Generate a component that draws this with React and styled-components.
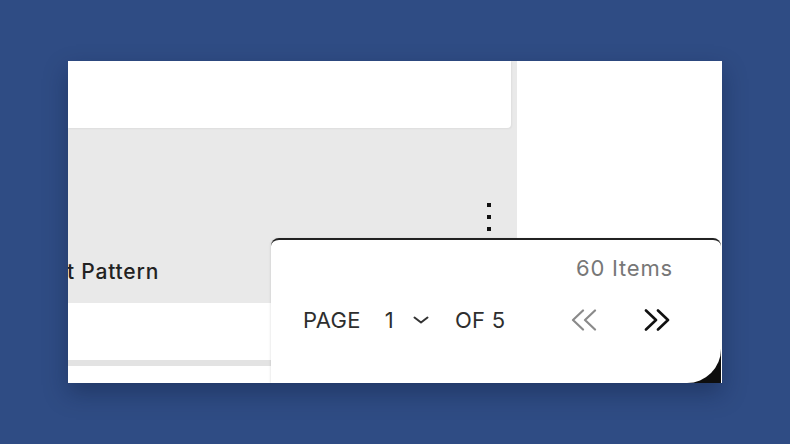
import React from "react";
import styled, { createGlobalStyle } from "styled-components";

const Global = createGlobalStyle`
  html, body { margin: 0; padding: 0; }
  body {
    background: #2f4c84;
    font-family: Inter, "Noto Sans", sans-serif;
    -webkit-font-smoothing: antialiased;
  }
`;

const Stage = styled.div`
  width: 790px;
  height: 444px;
  display: flex;
  align-items: center;
  justify-content: center;
`;

const Window = styled.div`
  position: relative;
  width: 654px;
  height: 322px;
  display: grid;
  grid-template-columns: 449px 1fr;
  background: #fff;
  overflow: hidden;
  box-shadow: 0 10px 22px rgba(10, 20, 50, 0.35);
`;

const LeftColumn = styled.div`
  display: flex;
  flex-direction: column;
  background: #e9e9e9;
`;

const TopCard = styled.div`
  height: 67px;
  margin-right: 6px;
  background: #fff;
  border-bottom-right-radius: 4px;
  box-shadow: 1px 1px 2px rgba(0, 0, 0, 0.05);
`;

const Section = styled.div`
  height: 175px;
  display: flex;
  flex-direction: column;
  padding-top: 75px;
  box-sizing: border-box;
`;

const KebabRow = styled.div`
  display: flex;
  justify-content: flex-end;
  padding-right: 26px;
`;

const Kebab = styled.div`
  display: flex;
  flex-direction: column;
  gap: 8px;
`;

const Dot = styled.span`
  width: 4px;
  height: 4px;
  background: #111;
`;

const Title = styled.div`
  margin-top: 28px;
  margin-left: -1px;
  font-size: 21px;
  font-weight: 500;
  letter-spacing: 0.8px;
  line-height: 26px;
  color: #222;
  white-space: nowrap;
`;

const Row = styled.div`
  height: 57px;
  background: #fff;
`;

const Divider = styled.div`
  height: 6px;
  background: #e3e3e3;
`;

const Filler = styled.div`
  flex: 1;
  background: #fff;
`;

const RightColumn = styled.div`
  background: #fff;
`;

const Popup = styled.div`
  position: absolute;
  left: 203px;
  top: 177px;
  right: 1px;
  bottom: 0;
  &::before {
    content: "";
    position: absolute;
    right: 0;
    bottom: 0;
    width: 36px;
    height: 44px;
    background: #0e0e0e;
  }
`;

const Panel = styled.div`
  position: relative;
  height: 100%;
  box-sizing: border-box;
  background: #fff;
  border-top: 2px solid #222;
  border-radius: 8px 8px 34px 0;
  box-shadow: -1px 0 2px rgba(0, 0, 0, 0.08);
  display: flex;
  flex-direction: column;
  padding: 0 48px 0 32px;
`;

const Count = styled.div`
  margin-top: 15px;
  text-align: right;
  font-size: 22px;
  letter-spacing: 0.8px;
  line-height: 26px;
  color: #777;
`;

const Controls = styled.div`
  margin-top: 26px;
  display: flex;
  align-items: center;
  font-size: 22px;
  letter-spacing: 0.3px;
  line-height: 26px;
  color: #2e2e2e;
`;

const Label = styled.span`
  margin-right: ${(p) => p.$gap || 0}px;
`;

const Select = styled.span`
  display: inline-flex;
  align-items: center;
  gap: 19px;
  margin-right: 26px;
`;

const NavGroup = styled.div`
  margin-left: auto;
  display: flex;
  align-items: center;
  gap: 47px;
  margin-right: 3px;
`;

const NavButton = styled.span`
  display: inline-flex;
  color: ${(p) => (p.$disabled ? "#8a8a8a" : "#111")};
`;

const ChevronDown = () => (
  <svg width="16" height="8" viewBox="0 0 16 8" fill="none">
    <path d="M1.5 1.5 L8 6.5 L14.5 1.5" stroke="#333" strokeWidth="2" strokeLinecap="round" strokeLinejoin="round" />
  </svg>
);

const DoubleLeft = () => (
  <svg width="26" height="22" viewBox="0 0 26 22" fill="none">
    <path d="M12 1.5 L2 11 L12 20.5 M24 1.5 L14 11 L24 20.5" stroke="currentColor" strokeWidth="2.2" strokeLinecap="round" strokeLinejoin="round" />
  </svg>
);

const DoubleRight = () => (
  <svg width="26" height="22" viewBox="0 0 26 22" fill="none">
    <path d="M2 1.5 L12 11 L2 20.5 M14 1.5 L24 11 L14 20.5" stroke="currentColor" strokeWidth="2.6" strokeLinecap="round" strokeLinejoin="round" />
  </svg>
);

export default function App() {
  return (
    <>
      <Global />
      <Stage>
        <Window>
          <LeftColumn>
            <TopCard />
            <Section>
              <KebabRow>
                <Kebab>
                  <Dot />
                  <Dot />
                  <Dot />
                </Kebab>
              </KebabRow>
              <Title>t Pattern</Title>
            </Section>
            <Row />
            <Divider />
            <Filler />
          </LeftColumn>
          <RightColumn />
          <Popup>
            <Panel>
              <Count>60 Items</Count>
              <Controls>
                <Label $gap={24}>PAGE</Label>
                <Select>
                  <span>1</span>
                  <ChevronDown />
                </Select>
                <Label>OF 5</Label>
                <NavGroup>
                  <NavButton $disabled>
                    <DoubleLeft />
                  </NavButton>
                  <NavButton>
                    <DoubleRight />
                  </NavButton>
                </NavGroup>
              </Controls>
            </Panel>
          </Popup>
        </Window>
      </Stage>
    </>
  );
}
